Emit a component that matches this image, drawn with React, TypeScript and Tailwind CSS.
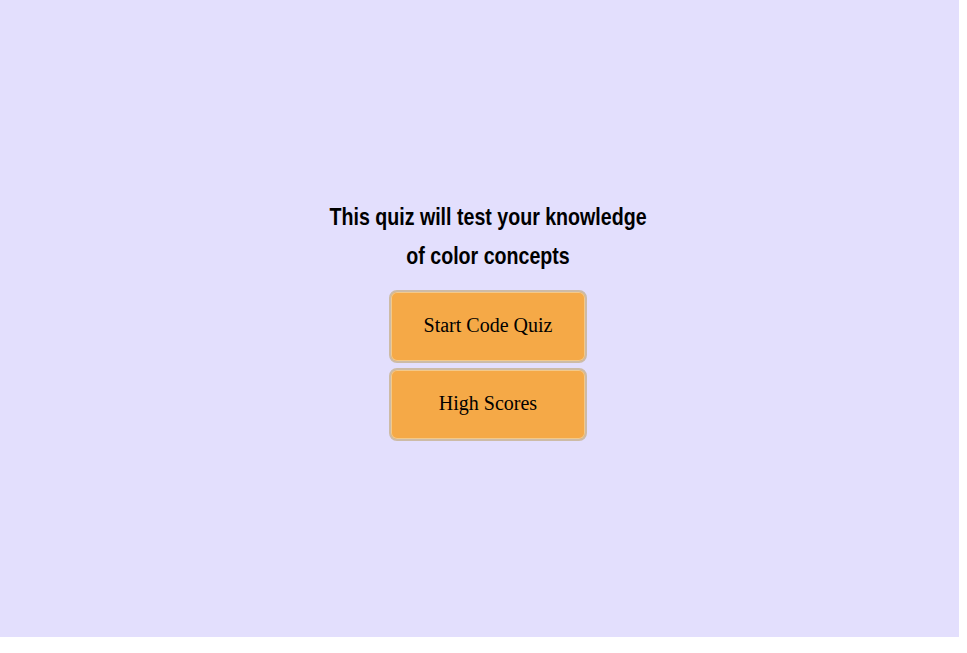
export default function App() {
  return (
    <div className="w-[959px] h-[637px] bg-[#e3dffd] flex flex-col items-center pt-[197px] pl-[17px]">
      <h1
        className="text-center font-bold text-black text-[24px] leading-[39px] scale-x-[0.817]"
        style={{ fontFamily: '"Liberation Sans", Arial, sans-serif' }}
      >
        This quiz will test your knowledge
        <br />
        of color concepts
      </h1>
      <div className="mt-[15px] flex flex-col gap-[5px]">
        {["Start Code Quiz", "High Scores"].map((t) => (
          <button
            key={t}
            className="w-[198px] h-[73px] pb-[4px] rounded-[8px] border-2 border-[#cdbba6] bg-[#f5a947] text-black text-[20px] shadow-[inset_0_0_0_1px_#f3c98a]"
            style={{ fontFamily: '"Liberation Serif", serif' }}
          >
            {t}
          </button>
        ))}
      </div>
    </div>
  );
}
